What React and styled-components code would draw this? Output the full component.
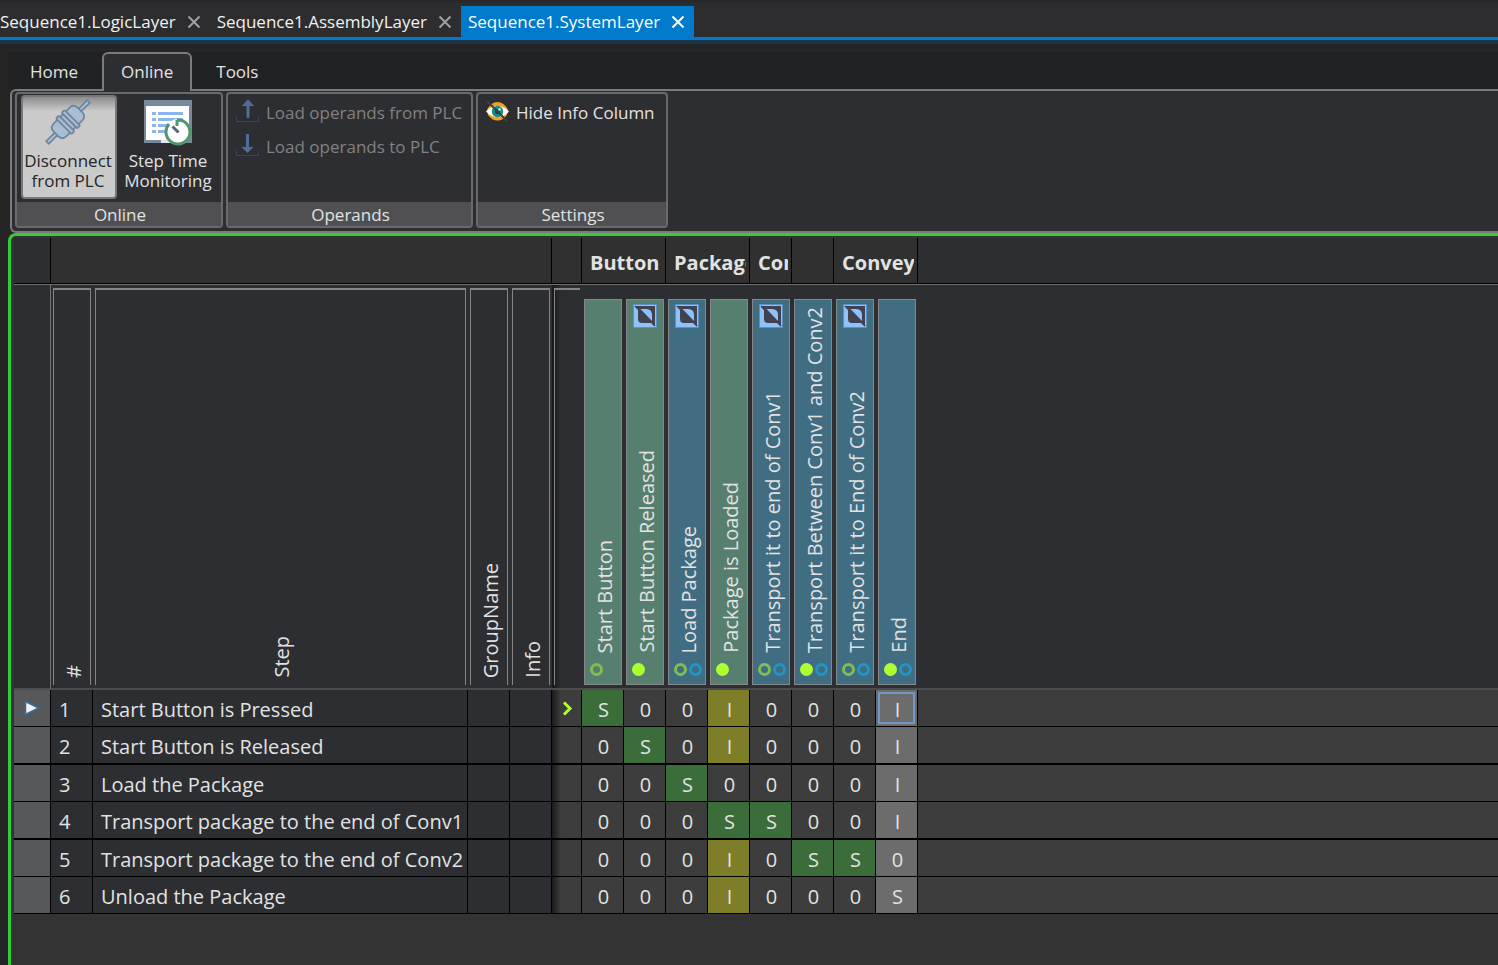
import React, { useState } from 'react';
import styled, { createGlobalStyle } from 'styled-components';

const GlobalStyle = createGlobalStyle`
  * {
    box-sizing: border-box;
  }

  body {
    margin: 0;
    background: #252526;
    color: #e2e2e2;
    font-family: "Open Sans", "Noto Sans", sans-serif;
    font-size: 17px;
    overflow: hidden;
  }

  button {
    font: inherit;
    color: inherit;
    background: none;
    border: 0;
    padding: 0;
  }
`;

const Page = styled.div`
  display: flex;
  flex-direction: column;
  min-height: 100vh;
`;

/* ---------- document tabs ---------- */

const DocumentTabs = styled.nav`
  display: flex;
  height: 44px;
  padding-top: 3px;
  background: #2d2d30;
  border-top: 3px solid #29292b;
  border-bottom: 4px solid #1c3447;
  box-shadow: inset 0 -3px #007acc;
`;

const DocumentTab = styled.div`
  display: flex;
  align-items: center;
  height: 31px;
  padding: 0 9px 0 7px;
  gap: 11px;
  background: ${({ $active }) => ($active ? '#007acc' : 'transparent')};
  color: ${({ $active }) => ($active ? '#ffffff' : '#f1f1f1')};

  &:first-child {
    padding-left: 0;
  }
`;

const DocumentName = styled.button`
  line-height: 24px;
  white-space: nowrap;
`;

const CloseButton = styled.button`
  display: flex;
  color: ${({ $active }) => ($active ? '#ffffff' : '#a0a0a0')};
`;

/* ---------- ribbon ---------- */

const RibbonTabs = styled.div`
  display: flex;
  gap: 5px;
  height: 37px;
  margin: 8px 0 0 8px;
  padding-left: 3px;
  background: #202123;
`;

const RibbonTab = styled.button`
  position: relative;
  height: 39px;
  padding: 0 17px 2px;
  border: 2px solid ${({ $active }) => ($active ? '#7b7b7d' : 'transparent')};
  border-bottom: 0;
  border-radius: 6px 6px 0 0;
  background: ${({ $active }) => ($active ? '#2d2e32' : 'transparent')};
`;

const Ribbon = styled.div`
  display: flex;
  gap: 3px;
  height: 144px;
  margin-left: 10px;
  padding: 1px 0 3px 3px;
  border: 2px solid #7b7b7d;
  border-right: 0;
  border-radius: 6px 0 0 6px;
  background: #2d2e32;
`;

const RibbonGroup = styled.section`
  display: flex;
  flex-direction: column;
  min-width: ${({ $width }) => $width}px;
  border: 2px solid #6a6a6c;
  border-radius: 4px;
`;

const GroupBody = styled.div`
  display: flex;
  flex: 1;
  flex-direction: ${({ $column }) => ($column ? 'column' : 'row')};
  gap: ${({ $column }) => ($column ? '10px' : '4px')};
  padding: ${({ $column }) => ($column ? '6px 8px' : '1px 4px')};
`;

const GroupLabel = styled.div`
  height: 24px;
  padding-left: 2px;
  line-height: 26px;
  text-align: center;
  background: #505052;
`;

const LargeButton = styled.button`
  display: flex;
  flex-direction: column;
  align-items: center;
  gap: 4px;
  width: 96px;
  height: 104px;
  padding: 2px 2px 0 0;
  border: 2px solid ${({ $pressed }) => ($pressed ? '#77777a' : 'transparent')};
  border-radius: 4px;
  background: ${({ $pressed }) =>
    $pressed ? 'linear-gradient(#8c8c8c, #cacaca 14px)' : 'transparent'};
  color: ${({ $pressed }) => ($pressed ? '#252526' : '#e2e2e2')};
  line-height: 20px;
`;

const SmallButton = styled.button`
  display: flex;
  align-items: center;
  gap: 7px;
  height: 24px;
  white-space: nowrap;

  &:disabled {
    color: #818184;
  }
`;

/* ---------- sequence grid ---------- */

const GridFrame = styled.main`
  flex: 1;
  margin-left: 8px;
  padding: 2px 0 0 3px;
  border: solid #32cd32;
  border-width: 3px 0 0 3px;
  border-radius: 8px 0 0 0;
  background: #333333;
`;

const Grid = styled.table`
  width: 100%;
  table-layout: fixed;
  border-collapse: separate;
  border-spacing: 0;
  font-size: 20px;
`;

const ObjectHeader = styled.th`
  height: 46px;
  padding: 4px 3px 0 8px;
  border-bottom: 1px solid #000000;
  border-right: ${({ $plain }) => ($plain ? '0' : '1px solid #000000')};
  background: ${({ $dark }) => ($dark ? '#2d2e32' : '#303030')};
  text-align: left;
  line-height: 28px;
`;

const ClippedName = styled.div`
  overflow: hidden;
  white-space: nowrap;
`;

const ColumnHeader = styled.th`
  height: 406px;
  padding: 3px 2px;
  border-top: 1px solid #707072;
  border-bottom: 2px solid #4c4c4e;
  border-right: ${({ $edge }) => ($edge ? '1px solid #707072' : '0')};
  background: ${({ $shaded }) =>
    $shaded ? 'linear-gradient(90deg, #18181a, #2d2e32 9px)' : '#2d2e32'};
  font-weight: 400;
  vertical-align: top;
`;

const HeaderBox = styled.div`
  display: flex;
  align-items: center;
  justify-content: flex-end;
  flex-direction: column;
  height: 397px;
  padding-bottom: 7px;
  border: solid #848486;
  border-width: ${({ $open }) => ($open ? '2px 0 0 1px' : '2px 1px 0 1px')};
`;

const SignalBox = styled.div`
  display: flex;
  flex-direction: column;
  align-items: center;
  height: 386px;
  margin-top: 11px;
  padding-top: 4px;
  border: 1px solid #858788;
  background: ${({ $kind }) => ($kind === 'input' ? '#567f70' : '#416d82')};
`;

const VerticalText = styled.span`
  padding-right: 3px;
  writing-mode: vertical-rl;
  transform: rotate(180deg);
  white-space: nowrap;
  line-height: 28px;
`;

const SignalName = styled(VerticalText)`
  margin-top: auto;
`;

const Indicators = styled.div`
  display: flex;
  align-self: flex-start;
  gap: 2px;
  padding: 10px 5px 8px;
`;

const ringColors = {
  on: '#adff2f',
  off: '#7fbf50',
  output: '#2295c6',
};

const Ring = styled.i`
  width: 13px;
  height: 13px;
  border: 3px solid ${({ $state }) => ringColors[$state]};
  border-radius: 50%;
  background: ${({ $state }) => ($state === 'on' ? '#adff2f' : 'transparent')};
`;

const Row = styled.tr`
  height: 37px;

  &:nth-child(2),
  &:nth-child(4) {
    height: 38px;
  }

  &:nth-child(2) > *,
  &:nth-child(4) > * {
    border-bottom-width: 2px;
  }
`;

const RowHeader = styled.th`
  padding: 0;
  border: solid #000000;
  border-width: 0 1px 1px 0;
  background: #57585b;
  line-height: 0;
`;

const TextCell = styled.td`
  padding: 3px 0 0 8px;
  border: solid #000000;
  border-width: 0 1px 1px 0;
  background: #2d2e32;
  line-height: 28px;
  white-space: nowrap;
`;

const MarkCell = styled.td`
  padding: 0;
  border: solid #000000;
  border-width: 0 1px 1px 0;
  background: linear-gradient(90deg, #1a1a1a, #3d3d3d 9px);
  text-align: center;
  line-height: 0;
`;

const FillCell = styled.td`
  padding: 0;
  border-bottom: 1px solid #000000;
  background: #3d3d3d;
`;

const valueColors = {
  S: '#3b6d3a',
  I: '#7e7e28',
  0: '#3d3d3d',
};

const ValueCell = styled.td`
  padding: 3px 0 0 2px;
  border: solid #000000;
  border-width: 0 1px 1px 0;
  background: ${({ $value, $current }) => ($current ? '#6c6c6c' : valueColors[$value])};
  box-shadow: ${({ $focused }) =>
    $focused ? 'inset 0 0 0 2px #6c6c6c, inset 0 0 0 4px #6f97c8' : 'none'};
  text-align: center;
  line-height: 28px;
`;

const CloseIcon = () => (
  <svg width="14" height="14" viewBox="0 0 14 14" stroke="currentColor" strokeWidth="2" aria-hidden="true">
    <path d="M1.5 1.5 12.5 12.5M12.5 1.5 1.5 12.5" />
  </svg>
);

const PlugIcon = () => (
  <svg width="48" height="48" viewBox="0 0 48 48" fill="#a9bdd3" stroke="#71869f" strokeWidth="1.8" strokeLinejoin="round" aria-hidden="true">
    <g transform="rotate(45 24 23)">
      <path d="M22.200 -6h3.600v13h-3.600zM22.200 39h3.600v13h-3.600z" />
      <path d="M15 18v-6q0-6 6-6h6q6 0 6 6v6z" />
      <path d="M15 28v6q0 6 6 6h6q6 0 6-6v-6z" />
      <rect x="13" y="17" width="22" height="4" rx="1" />
      <path d="M15 21h18v4H15z" />
      <rect x="13" y="25" width="22" height="4" rx="1" />
    </g>
  </svg>
);

const StepTimeIcon = () => (
  <svg width="48" height="48" viewBox="0 0 48 48" aria-hidden="true">
    <path fill="#778a9b" d="M0 1h48v43H0z" />
    <path fill="#ffffff" d="M2 7h43v34H2z" />
    <path fill="#dfe6ec" d="M17 41h10v3H17z" />
    <g fill="#8cb4ee">
      <path d="M8 13h4v3H8zM14 13h25v3H14zM8 19h4v3H8zM14 19h25v3H14zM8 25h4v3H8zM14 25h12v3H14zM8 31h4v3H8zM14 31h8v3H14z" />
    </g>
    <circle cx="34" cy="33" r="13" fill="#ffffff" />
    <path d="M33 21v6M33 21a12 12 0 1 1-8 4" fill="none" stroke="#51976d" strokeWidth="3" />
    <path d="m28.5 27.5 6 6" stroke="#566579" strokeWidth="3" />
  </svg>
);

const TransferIcon = ({ up }) => (
  <svg width="23" height="24" viewBox="0 0 23 24" fill="none" aria-hidden="true">
    <path d="M.5 17v4.500h22V17" stroke="#34466a" />
    {up ? (
      <path d="M10.500 18V6H6L12 -1l6 7h-4.500v12z" fill="#506c98" />
    ) : (
      <path d="M10 0v13H5.500l6 6 6-6H13V0z" fill="#506c98" />
    )}
  </svg>
);

const EyeIcon = () => (
  <svg width="23" height="22" viewBox="0 0 23 22" aria-hidden="true">
    <path d="M1 9Q5 1 11.500 1T22 9L21 14Q17 19.500 11.500 19.500T2 14z" fill="#f8a01e" />
    <path d="M0 10.500Q5 5 11.500 5T23 10.500Q18 16 11.500 16T0 10.500" fill="#ffffff" />
    <circle cx="11.500" cy="10.500" r="5.700" fill="#148f80" />
    <circle cx="11.500" cy="10.500" r="2.500" fill="#263746" />
    <circle cx="13.500" cy="8.500" r="1.300" fill="#ffffff" />
    <path d="m1 0 20 20" stroke="#34424e" strokeWidth="2" />
  </svg>
);

const ConditionIcon = () => (
  <svg width="24" height="24" viewBox="0 0 24 24" aria-hidden="true">
    <path d="M.5.500h23v23H.500z" fill="#8fc2fb" stroke="#5792cc" />
    <path d="M2 2h20v20z" fill="#40434f" />
    <path d="M5 5v10q0 4 4 4h10z" fill="#40434f" />
    <path d="M7.500 5H13q6 0 6 6v6z" fill="#8fc2fb" />
    <path d="m2 2 20 20" stroke="#40434f" strokeWidth="1.600" />
  </svg>
);

const RowPointer = () => (
  <svg width="16" height="16" viewBox="0 0 16 16" aria-hidden="true">
    <path d="M1.500 1.500 14.500 8 1.500 14.500z" fill="#f2f2f2" stroke="#356f9f" strokeWidth="1.500" />
  </svg>
);

const StepArrow = () => (
  <svg width="12" height="16" viewBox="0 0 12 16" aria-hidden="true">
    <path d="m3 2.500 6 6-6 6" fill="none" stroke="#adff2f" strokeWidth="3" />
  </svg>
);

const documents = ['Sequence1.LogicLayer', 'Sequence1.AssemblyLayer', 'Sequence1.SystemLayer'];

const ribbonTabs = ['Home', 'Online', 'Tools'];

const objects = [
  { name: 'Button', span: 2 },
  { name: 'Package', span: 2 },
  { name: 'Con', span: 1 },
  { name: '', span: 1 },
  { name: 'Convey', span: 2 },
];

const signals = [
  { name: 'Start Button', kind: 'input', rings: ['off'] },
  { name: 'Start Button Released', kind: 'input', rings: ['on'], condition: true },
  { name: 'Load Package', kind: 'output', rings: ['off', 'output'], condition: true },
  { name: 'Package is Loaded', kind: 'input', rings: ['on'] },
  { name: 'Transport it to end of Conv1', kind: 'output', rings: ['off', 'output'], condition: true },
  { name: 'Transport Between Conv1 and Conv2', kind: 'output', rings: ['on', 'output'] },
  { name: 'Transport it to End of Conv2', kind: 'output', rings: ['off', 'output'], condition: true },
  { name: 'End', kind: 'output', rings: ['on', 'output'] },
];

const steps = [
  { name: 'Start Button is Pressed', values: 'S00I000I' },
  { name: 'Start Button is Released', values: '0S0I000I' },
  { name: 'Load the Package', values: '00S0000I' },
  { name: 'Transport package to the end of Conv1', values: '000SS00I' },
  { name: 'Transport package to the end of Conv2', values: '000I0SS0' },
  { name: 'Unload the Package', values: '000I000S' },
];

const columnWidths = [37, 42, 375, 42, 42, 30, ...signals.map(() => 42)];

const SequenceGrid = () => {
  const [focused, setFocused] = useState({ row: 0, column: 7 });

  return (
    <Grid>
      <colgroup>
        {columnWidths.map((width, index) => (
          <col key={index} width={width} />
        ))}
        <col />
      </colgroup>
      <thead>
        <tr>
          <ObjectHeader $dark />
          <ObjectHeader colSpan={4} />
          <ObjectHeader />
          {objects.map((object, index) => (
            <ObjectHeader key={index} colSpan={object.span}>
              <ClippedName>{object.name}</ClippedName>
            </ObjectHeader>
          ))}
          <ObjectHeader $dark $plain />
        </tr>
        <tr>
          <ColumnHeader $edge />
          {['#', 'Step', 'GroupName', 'Info'].map((name) => (
            <ColumnHeader key={name} scope="col">
              <HeaderBox>
                <VerticalText>{name}</VerticalText>
              </HeaderBox>
            </ColumnHeader>
          ))}
          <ColumnHeader $shaded>
            <HeaderBox $open />
          </ColumnHeader>
          {signals.map((signal) => (
            <ColumnHeader key={signal.name} scope="col">
              <SignalBox $kind={signal.kind}>
                {signal.condition && <ConditionIcon />}
                <SignalName>{signal.name}</SignalName>
                <Indicators>
                  {signal.rings.map((state) => (
                    <Ring key={state} $state={state} />
                  ))}
                </Indicators>
              </SignalBox>
            </ColumnHeader>
          ))}
          <ColumnHeader />
        </tr>
      </thead>
      <tbody>
        {steps.map((step, row) => (
          <Row key={step.name}>
            <RowHeader scope="row">{row === focused.row && <RowPointer />}</RowHeader>
            <TextCell>{row + 1}</TextCell>
            <TextCell>{step.name}</TextCell>
            <TextCell />
            <TextCell />
            <MarkCell>{row === 0 && <StepArrow />}</MarkCell>
            {step.values.split('').map((value, column) => (
              <ValueCell
                key={column}
                $value={value}
                $current={column === focused.column}
                $focused={row === focused.row && column === focused.column}
                onClick={() => setFocused({ row, column })}
              >
                {value}
              </ValueCell>
            ))}
            <FillCell />
          </Row>
        ))}
      </tbody>
    </Grid>
  );
};

const App = () => {
  const [activeDocument, setActiveDocument] = useState('Sequence1.SystemLayer');
  const [activeTab, setActiveTab] = useState('Online');

  return (
    <Page>
      <GlobalStyle />
      <DocumentTabs>
        {documents.map((name) => (
          <DocumentTab key={name} $active={name === activeDocument}>
            <DocumentName onClick={() => setActiveDocument(name)}>{name}</DocumentName>
            <CloseButton $active={name === activeDocument} aria-label={`Close ${name}`}>
              <CloseIcon />
            </CloseButton>
          </DocumentTab>
        ))}
      </DocumentTabs>

      <RibbonTabs>
        {ribbonTabs.map((name) => (
          <RibbonTab key={name} $active={name === activeTab} onClick={() => setActiveTab(name)}>
            {name}
          </RibbonTab>
        ))}
      </RibbonTabs>
      <Ribbon>
        <RibbonGroup $width={208}>
          <GroupBody>
            <LargeButton $pressed>
              <PlugIcon />
              <span>
                Disconnect
                <br />
                from PLC
              </span>
            </LargeButton>
            <LargeButton>
              <StepTimeIcon />
              <span>
                Step Time
                <br />
                Monitoring
              </span>
            </LargeButton>
          </GroupBody>
          <GroupLabel>Online</GroupLabel>
        </RibbonGroup>
        <RibbonGroup $width={247}>
          <GroupBody $column>
            <SmallButton disabled>
              <TransferIcon up />
              Load operands from PLC
            </SmallButton>
            <SmallButton disabled>
              <TransferIcon />
              Load operands to PLC
            </SmallButton>
          </GroupBody>
          <GroupLabel>Operands</GroupLabel>
        </RibbonGroup>
        <RibbonGroup $width={192}>
          <GroupBody $column>
            <SmallButton>
              <EyeIcon />
              Hide Info Column
            </SmallButton>
          </GroupBody>
          <GroupLabel>Settings</GroupLabel>
        </RibbonGroup>
      </Ribbon>

      <GridFrame>
        <SequenceGrid />
      </GridFrame>
    </Page>
  );
};

export default App;
